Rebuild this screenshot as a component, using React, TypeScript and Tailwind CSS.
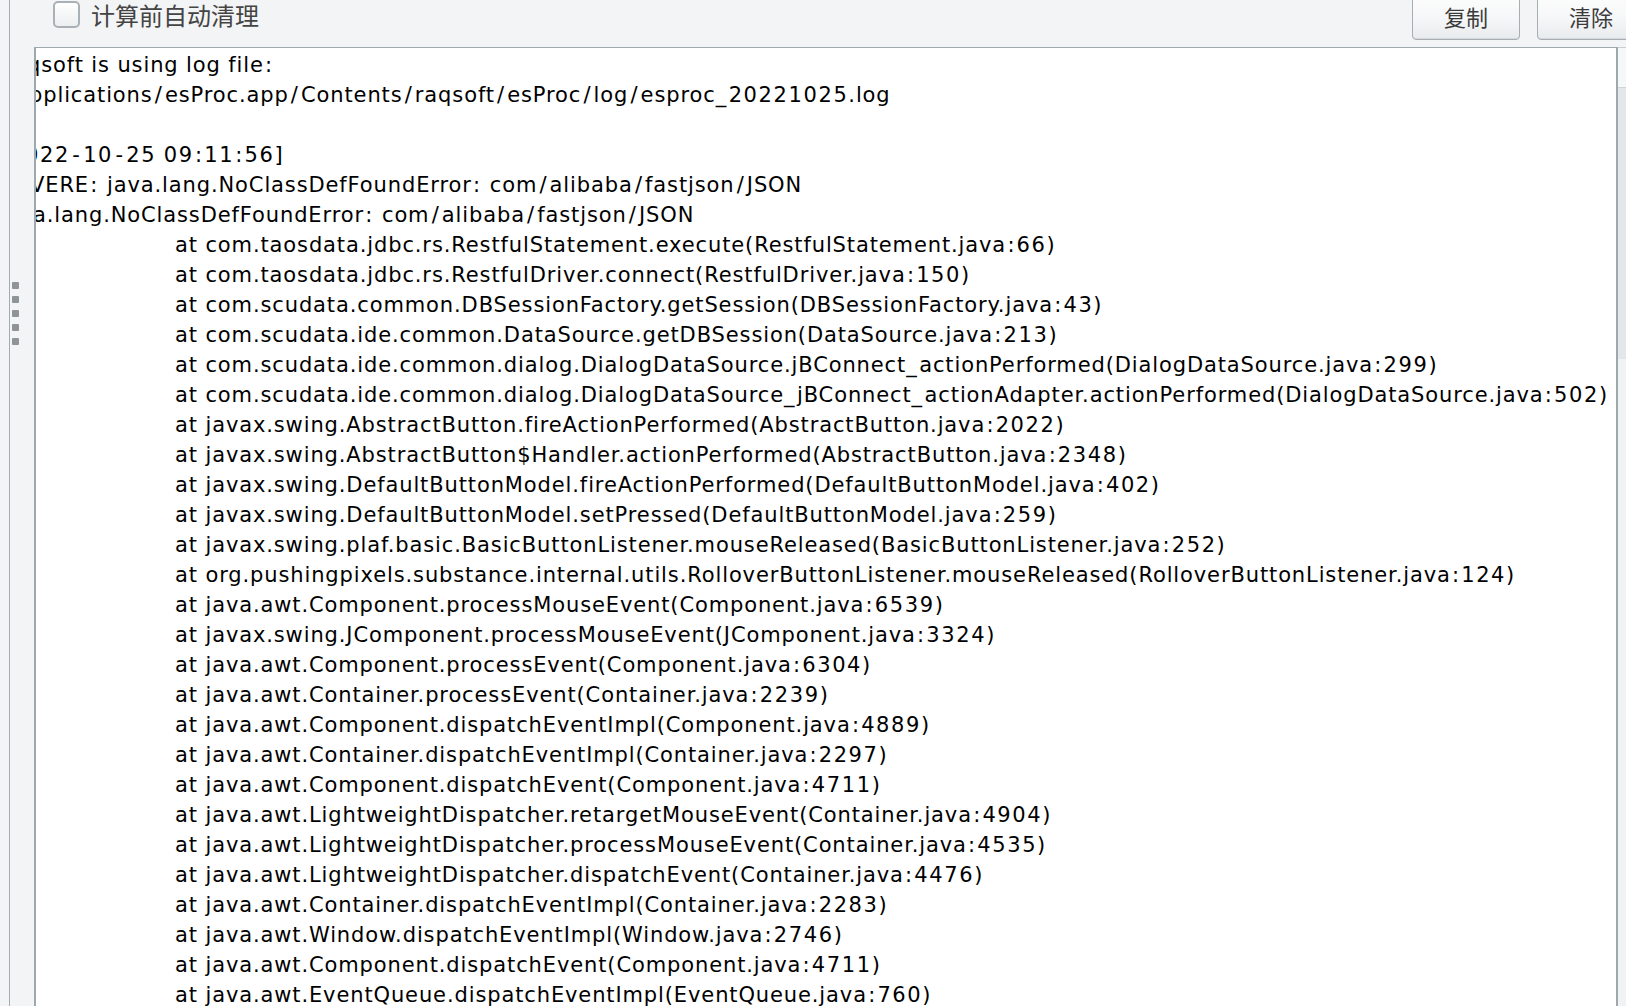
import React from "react";

const atLines: string[] = [
  "at com.taosdata.jdbc.rs.RestfulStatement.execute(RestfulStatement.java:66)",
  "at com.taosdata.jdbc.rs.RestfulDriver.connect(RestfulDriver.java:150)",
  "at com.scudata.common.DBSessionFactory.getSession(DBSessionFactory.java:43)",
  "at com.scudata.ide.common.DataSource.getDBSession(DataSource.java:213)",
  "at com.scudata.ide.common.dialog.DialogDataSource.jBConnect_actionPerformed(DialogDataSource.java:299)",
  "at com.scudata.ide.common.dialog.DialogDataSource_jBConnect_actionAdapter.actionPerformed(DialogDataSource.java:502)",
  "at javax.swing.AbstractButton.fireActionPerformed(AbstractButton.java:2022)",
  "at javax.swing.AbstractButton$Handler.actionPerformed(AbstractButton.java:2348)",
  "at javax.swing.DefaultButtonModel.fireActionPerformed(DefaultButtonModel.java:402)",
  "at javax.swing.DefaultButtonModel.setPressed(DefaultButtonModel.java:259)",
  "at javax.swing.plaf.basic.BasicButtonListener.mouseReleased(BasicButtonListener.java:252)",
  "at org.pushingpixels.substance.internal.utils.RolloverButtonListener.mouseReleased(RolloverButtonListener.java:124)",
  "at java.awt.Component.processMouseEvent(Component.java:6539)",
  "at javax.swing.JComponent.processMouseEvent(JComponent.java:3324)",
  "at java.awt.Component.processEvent(Component.java:6304)",
  "at java.awt.Container.processEvent(Container.java:2239)",
  "at java.awt.Component.dispatchEventImpl(Component.java:4889)",
  "at java.awt.Container.dispatchEventImpl(Container.java:2297)",
  "at java.awt.Component.dispatchEvent(Component.java:4711)",
  "at java.awt.LightweightDispatcher.retargetMouseEvent(Container.java:4904)",
  "at java.awt.LightweightDispatcher.processMouseEvent(Container.java:4535)",
  "at java.awt.LightweightDispatcher.dispatchEvent(Container.java:4476)",
  "at java.awt.Container.dispatchEventImpl(Container.java:2283)",
  "at java.awt.Window.dispatchEventImpl(Window.java:2746)",
  "at java.awt.Component.dispatchEvent(Component.java:4711)",
  "at java.awt.EventQueue.dispatchEventImpl(EventQueue.java:760)",
];

function cat(ch: string): string {
  if (ch >= "0" && ch <= "9") return "d";
  if (ch === "-") return "h";
  if (ch === "/") return "s";
  if (ch === ":") return "c";
  if (ch === "_") return "u";
  return "n";
}

const catClass: Record<string, string> = {
  d: "tracking-[1.6px]",
  h: "px-[2.4px]",
  s: "px-[2.2px]",
  c: "px-[1.25px]",
  u: "tracking-[2.5px]",
  n: "",
};

const single: Record<string, boolean> = { h: true, s: true, c: true };

function LogText({ text }: { text: string }) {
  const parts: { c: string; t: string }[] = [];
  for (const ch of text) {
    const c = cat(ch);
    const last = parts[parts.length - 1];
    if (last && last.c === c && !single[c]) last.t += ch;
    else parts.push({ c, t: ch });
  }
  return (
    <>
      {parts.map((p, i) =>
        p.c === "n" ? (
          <span key={i}>{p.t}</span>
        ) : (
          <span key={i} className={catClass[p.c]}>
            {p.t}
          </span>
        )
      )}
    </>
  );
}

function Button({ label }: { label: string }) {
  return (
    <div className="w-[108px] h-[45px] -mt-[5px] shrink-0 rounded-[4px] border border-[#a7aeb3] bg-gradient-to-b from-[#fdfdfd] via-[#f6f7f8] to-[#e8ebed] flex items-center justify-center pb-[3px] text-[22px] leading-[30px] text-[#3b3b3b] font-['Noto_Sans_CJK_SC',sans-serif] shadow-[inset_0_-1px_0_#d5d9dc]">
      {label}
    </div>
  );
}

export default function App() {
  return (
    <div className="w-[1626px] h-[1006px] overflow-hidden bg-[#f3f4f5] flex font-['DejaVu_Sans',sans-serif]">
      <div className="w-[10px] shrink-0 border-r border-[#a3acb1]" />
      <div className="flex-1 flex flex-col min-w-0">
        <div className="h-[47px] shrink-0 flex items-start">
          <div className="flex items-center gap-[11px] ml-[43px] mt-[1px]">
            <div className="w-[27px] h-[27px] rounded-[5px] border-2 border-[#aab1b6] bg-gradient-to-b from-[#ffffff] to-[#eceef0]" />
            <span className="text-[24px] leading-[27px] text-[#444444] font-['Noto_Sans_CJK_SC',sans-serif]">
              计算前自动清理
            </span>
          </div>
          <div className="flex-1" />
          <div className="flex gap-[17px] -mr-[19px]">
            <Button label="复制" />
            <Button label="清除" />
          </div>
        </div>
        <div className="flex-1 flex min-h-0">
          <div className="w-[24px] shrink-0 flex flex-col items-start pl-[2px] pt-[235px] gap-[7px]">
            {[0, 1, 2, 3, 4].map((i) => (
              <div key={i} className="w-[7px] h-[7px] rounded-[1px] bg-[#8f9497]" />
            ))}
          </div>
          <div className="flex-1 min-w-0 border-t border-l-2 border-r-2 border-[#9fa8ad] bg-white overflow-hidden pt-[2px] text-[21px] leading-[30px] tracking-[0.88px] text-black">
            <div className="whitespace-pre -ml-[9px]"><LogText text="qsoft is using log file:" /></div>
            <div className="whitespace-pre -ml-[7px]"><LogText text="pplications/esProc.app/Contents/raqsoft/esProc/log/esproc_20221025.log" /></div>
            <div className="whitespace-pre h-[30px]"> </div>
            <div className="whitespace-pre -ml-[11px]"><LogText text="022-10-25 09:11:56]" /></div>
            <div className="whitespace-pre -ml-[6px]"><LogText text="VERE: java.lang.NoClassDefFoundError: com/alibaba/fastjson/JSON" /></div>
            <div className="whitespace-pre -ml-[3px]"><LogText text="a.lang.NoClassDefFoundError: com/alibaba/fastjson/JSON" /></div>
            {atLines.map((l, i) => (
              <div key={i} className="whitespace-pre pl-[139px]">
                <LogText text={l} />
              </div>
            ))}
          </div>
          <div className="w-[8px] shrink-0 flex flex-col border-t border-[#c9ced1]">
            <div className="h-[40px] bg-[#f6f7f8] border-b border-[#cfd4d7]" />
            <div className="h-[271px] bg-[#e4e7ea]" />
            <div className="flex-1 bg-[#f1f2f3]" />
          </div>
        </div>
      </div>
    </div>
  );
}
